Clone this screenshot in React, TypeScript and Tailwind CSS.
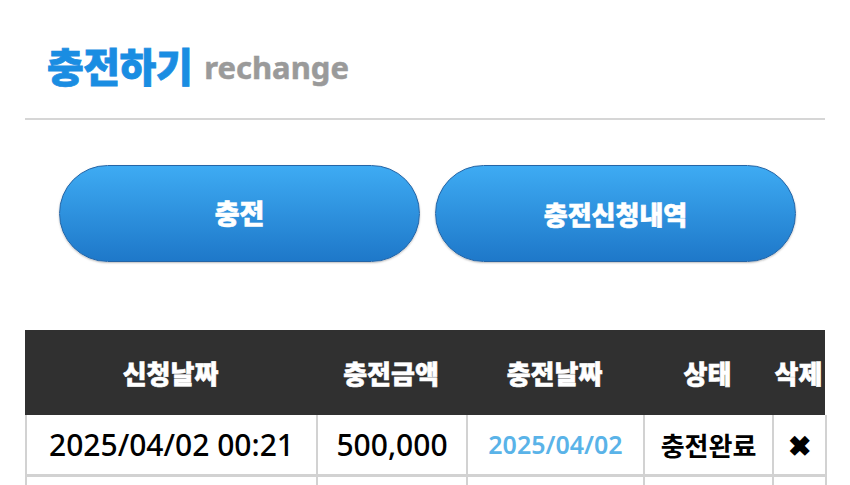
import React from "react"

const cols = "grid grid-cols-[291px_150px_177px_129px_53px]"

const headers = ["신청날짜", "충전금액", "충전날짜", "상태", "삭제"]

const rows = [
  { requested: "2025/04/02 00:21", amount: "500,000", charged: "2025/04/02", status: "충전완료", remove: "✖" },
  { requested: "", amount: "", charged: "", status: "", remove: "" },
]

export default function App() {
  return (
    <div className="w-[850px] h-[485px] overflow-hidden bg-white px-[25px] pt-[40px] font-['Noto_Sans','Noto_Sans_CJK_KR',sans-serif]">
      {/* Title */}
      <div className="h-[50px] flex items-end gap-[12px] pl-[22px]">
        <h1 className="text-[40px] leading-[50px] font-black tracking-[-0.5px] text-[#1a8de2] font-['Noto_Sans_CJK_KR',sans-serif] [-webkit-text-stroke:0.8px_#1a8de2]">
          충전하기
        </h1>
        <span className="text-[31px] leading-[46px] font-bold text-[#9a9a9a] font-['Noto_Sans',sans-serif] [-webkit-text-stroke:0.5px_#9a9a9a]">
          rechange
        </span>
      </div>
      <div className="mt-[28px] h-[2px] bg-[#d6d6d6]" />

      {/* Buttons */}
      <div className="mt-[45px] flex gap-[15px] pl-[34px]">
        <button className="w-[361px] h-[97px] rounded-full border border-[#2565a6] bg-gradient-to-b from-[#3eabf3] to-[#1e78c9] text-white text-[27px] font-black font-['Noto_Sans_CJK_KR',sans-serif] [-webkit-text-stroke:0.6px_white] shadow-[0_1px_2px_rgba(0,0,0,0.25)]">
          충전
        </button>
        <button className="w-[361px] h-[97px] rounded-full border border-[#2565a6] bg-gradient-to-b from-[#3eabf3] to-[#1e78c9] text-white text-[26px] font-black font-['Noto_Sans_CJK_KR',sans-serif] [-webkit-text-stroke:0.6px_white] shadow-[0_1px_2px_rgba(0,0,0,0.25)]">
          충전신청내역
        </button>
      </div>

      {/* Table */}
      <div className="mt-[68px] w-[800px]">
        <div className={`${cols} h-[85px] bg-[#303030] text-white text-[26px] font-black font-['Noto_Sans_CJK_KR',sans-serif] [-webkit-text-stroke:0.6px_white]`}>
          {headers.map((h) => (
            <div key={h} className="flex items-center justify-center whitespace-nowrap">
              {h}
            </div>
          ))}
        </div>
        {rows.map((r, i) => (
          <div key={i} className={`${cols} h-[62px] border-l-2 border-[#d2d2d2]`}>
            <div className="flex items-center justify-center border-r-2 border-b-[3px] border-[#d2d2d2] text-[30px] font-medium text-black whitespace-nowrap">
              {r.requested}
            </div>
            <div className="flex items-center justify-center border-r-2 border-b-[3px] border-[#d2d2d2] text-[30px] font-medium text-black">
              {r.amount}
            </div>
            <div className="flex items-center justify-center border-r-2 border-b-[3px] border-[#d2d2d2] text-[25px] font-semibold text-[#5ab3e8]">
              {r.charged}
            </div>
            <div className="flex items-center justify-center border-r-2 border-b-[3px] border-[#d2d2d2] text-[26px] font-bold text-black font-['Noto_Sans_CJK_KR',sans-serif]">
              {r.status}
            </div>
            <div className="flex items-center justify-center border-r-2 border-b-[3px] border-[#d2d2d2] text-[28px] font-black text-black">
              {r.remove}
            </div>
          </div>
        ))}
      </div>
    </div>
  )
}
